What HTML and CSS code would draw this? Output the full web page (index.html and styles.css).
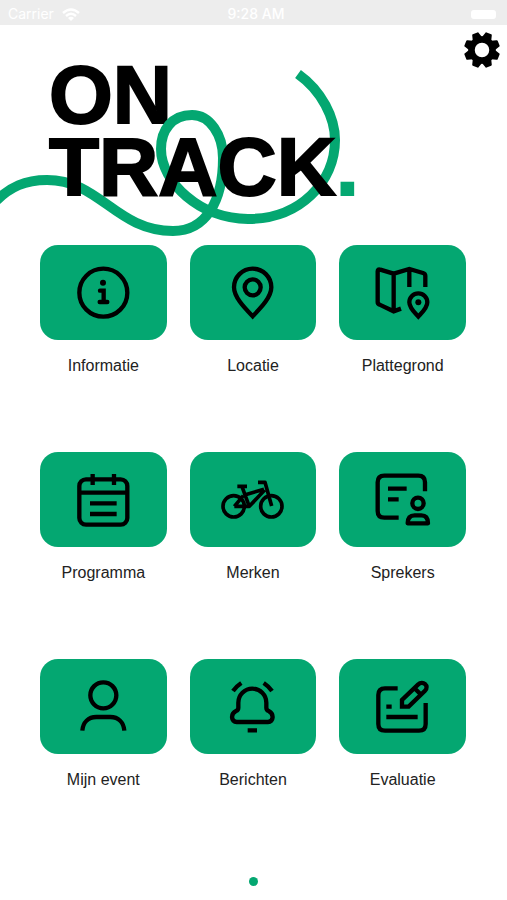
FILE: index.html
```html
<!DOCTYPE html>
<html lang="nl">
<head>
<meta charset="utf-8">
<meta name="viewport" content="width=device-width, initial-scale=1">
<title>On Track</title>
<link rel="stylesheet" href="styles.css">
</head>
<body>
<div class="status">
  <div class="carrier"><span>Carrier</span>
    <svg class="wifi" viewBox="0 0 18 13" aria-hidden="true"><path d="M1 5Q9-2 17 5M4 8Q9 3.500 14 8" fill="none" stroke="currentColor" stroke-width="2.400"/><path d="M6 10Q9 7.500 12 10L9 13Z" fill="currentColor"/></svg>
  </div>
  <span class="time">9:28 AM</span>
  <div class="power"><span class="battery"></span></div>
</div>
<header class="hero">
  <h1 class="logo"><span class="line back">ON</span><span class="line front">TRACK<span class="stop">.</span></span></h1>
  <svg class="ribbon" viewBox="0 25 360 220" aria-hidden="true"><path d="M-4 201C10 187 25 180 47 180C100 180 116 231 173 231C206 231 223 201 223 158C223 135 210 115 192 115C172 115 161 130 161 149C161 182 200 219 248 219C300 219 335 182 335 140C335 118 322 91 298 74"/></svg>
  <button class="settings" type="button" aria-label="Instellingen">
    <svg viewBox="-19 -19 38 38" aria-hidden="true">
      <circle r="10.500" fill="none" stroke="currentColor" stroke-width="6.500"/>
      <g fill="currentColor">
        <path id="tooth" transform="rotate(22.5)" d="M-5-12L-3.500-17Q-3.500-18-2.500-18H2.500Q3.500-18 3.500-17L5-12Z"/>
        <use href="#tooth" transform="rotate(45)"/><use href="#tooth" transform="rotate(90)"/><use href="#tooth" transform="rotate(135)"/><use href="#tooth" transform="rotate(180)"/><use href="#tooth" transform="rotate(225)"/><use href="#tooth" transform="rotate(270)"/><use href="#tooth" transform="rotate(315)"/>
      </g>
    </svg>
  </button>
</header>
<main class="menu">
  <a class="item" href="#informatie">
    <svg class="tile" viewBox="29 15 380 285" aria-hidden="true"><circle cx="219" cy="158" r="72"/><circle class="solid" cx="218" cy="128" r="9"/><path d="M209 152H220V186M208 186H231" stroke-linecap="round"/></svg>
    <span class="label">Informatie</span></a>
  <a class="item" href="#locatie">
    <svg class="tile" viewBox="30 15 380 285" aria-hidden="true"><path d="M218 229C194 204 162 172 162 142A56 56 0 0 1 274 142C274 172 242 204 218 229Z"/><circle cx="218" cy="142" r="24"/></svg>
    <span class="label">Locatie</span></a>
  <a class="item" href="#plattegrond">
    <svg class="tile" viewBox="28 15 380 285" aria-hidden="true"><path d="M214 206L192 214L150 194Q144 192 144 186V94Q144 86 152 89L192 101L239 87L280 99Q287 101 287 108V141M192 101V214M239 87V141"/><path d="M266 230C254 217 239 204 239 187A27 27 0 0 1 293 187C293 204 278 217 266 230Z"/><circle class="solid" cx="266" cy="187" r="9"/></svg>
    <span class="label">Plattegrond</span></a>
  <a class="item" href="#programma">
    <svg class="tile" viewBox="29 20 380 285" aria-hidden="true"><rect x="147" y="102" width="144" height="136" rx="20"/><path d="M147 142H291M187 86V119M251 86V119M179 174H259M179 206H259"/></svg>
    <span class="label">Programma</span></a>
  <a class="item" href="#merken">
    <svg class="tile" viewBox="30 20 380 285" aria-hidden="true"><circle cx="161" cy="183" r="32" stroke-width="11"/><circle cx="274" cy="183" r="32" stroke-width="11"/><path stroke-width="11" stroke-linejoin="round" d="M163 183L190 151M163 183H208L254 134M172 123H201M186 124L208 184M234 111H255L275 182M196 148L252 132"/></svg>
    <span class="label">Merken</span></a>
  <a class="item" href="#sprekers">
    <svg class="tile" viewBox="28 20 380 285" aria-hidden="true"><path d="M207 217H164Q144 217 144 197V111Q144 91 164 91H266Q286 91 286 111V138M175 130H231M175 162H207"/><circle cx="265" cy="174" r="17"/><path stroke-linejoin="round" d="M234 234C234 217 242 210 255 210H275C288 210 295 217 295 234Z"/></svg>
    <span class="label">Sprekers</span></a>
  <a class="item" href="#mijn-event">
    <svg class="tile" viewBox="29 24 380 285" aria-hidden="true"><circle cx="219" cy="133" r="39"/><path d="M156 239C158 214 174 198 198 198H240C264 198 280 214 282 239"/></svg>
    <span class="label">Mijn event</span></a>
  <a class="item" href="#berichten">
    <svg class="tile" viewBox="30 24 380 285" aria-hidden="true"><path d="M175 155A42 42 0 0 1 259 155V170Q259 177 266 180C283 188 281 213 264 213H170C153 213 151 188 168 180Q175 177 175 170ZM203 238H231M159 120Q170 105 184 96M276 120Q265 105 251 96"/></svg>
    <span class="label">Berichten</span></a>
  <a class="item" href="#evaluatie">
    <svg class="tile" viewBox="28 24 380 285" aria-hidden="true"><path d="M204 112H166Q146 112 146 132V219Q146 239 166 239H268Q288 239 288 219V156M170 167H186M170 198H264M217 167V147L265 101C280 87 300 105 286 119L237 167ZM254 111L275 132"/></svg>
    <span class="label">Evaluatie</span></a>
</main>
<footer class="pager"><span class="dot"></span></footer>
</body>
</html>
```
FILE: styles.css
```css
* { box-sizing: border-box; }

body {
  margin: 0;
  min-height: 100vh;
  display: flex;
  flex-direction: column;
  background: #fff;
  color: #000;
  font-family: "Liberation Sans", Arial, sans-serif;
}

.status {
  display: grid;
  grid-template-columns: 1fr auto 1fr;
  align-items: center;
  height: 25px;
  padding: 3px 3px 0 8px;
  background: #ededed;
  color: #fff;
  font: 500 14px/20px Inter, sans-serif;
}

.carrier {
  display: flex;
  align-items: center;
  gap: 8px;
  font-weight: 400;
}

.wifi { width: 18px; height: 13px; }

.power { display: flex; justify-content: flex-end; padding-right: 8px; }

.battery {
  width: 25px;
  height: 9px;
  border-radius: 3px;
  background: #fff;
}

.hero {
  position: relative;
  height: 220px;
  padding: 34px 49px 0;
}

.logo {
  margin: 0;
  font-size: 82px;
  line-height: 72px;
  font-weight: 700;
  -webkit-text-stroke: 2px currentColor;
}

.line { display: block; position: relative; }
.front { z-index: 2; }
.stop { color: #04a771; }

.ribbon {
  position: absolute;
  z-index: 1;
  top: 0;
  left: 0;
  width: 360px;
  height: 220px;
  fill: none;
  stroke: #04a771;
  stroke-width: 10;
}

.settings {
  position: absolute;
  z-index: 3;
  top: 6px;
  right: 6px;
  width: 38px;
  height: 38px;
  padding: 0;
  border: 0;
  background: none;
  color: #000;
}

.settings svg { display: block; }

.menu {
  display: grid;
  grid-template-columns: repeat(3, 1fr);
  gap: 76px 23px;
  padding: 0 41px 0 40px;
}

.item {
  display: flex;
  flex-direction: column;
  gap: 16px;
  color: #222;
  text-align: center;
  text-decoration: none;
}

.tile {
  display: block;
  width: 100%;
  border-radius: 18px;
  background: #04a771;
  fill: none;
  stroke: #000;
  stroke-width: 13;
}

.solid { fill: #000; stroke: none; }

.label { font-size: 16px; line-height: 20px; }

.pager {
  display: flex;
  justify-content: center;
  margin-top: auto;
  padding-bottom: 14px;
}

.dot {
  width: 9px;
  height: 9px;
  border-radius: 50%;
  background: #04a771;
}
```
